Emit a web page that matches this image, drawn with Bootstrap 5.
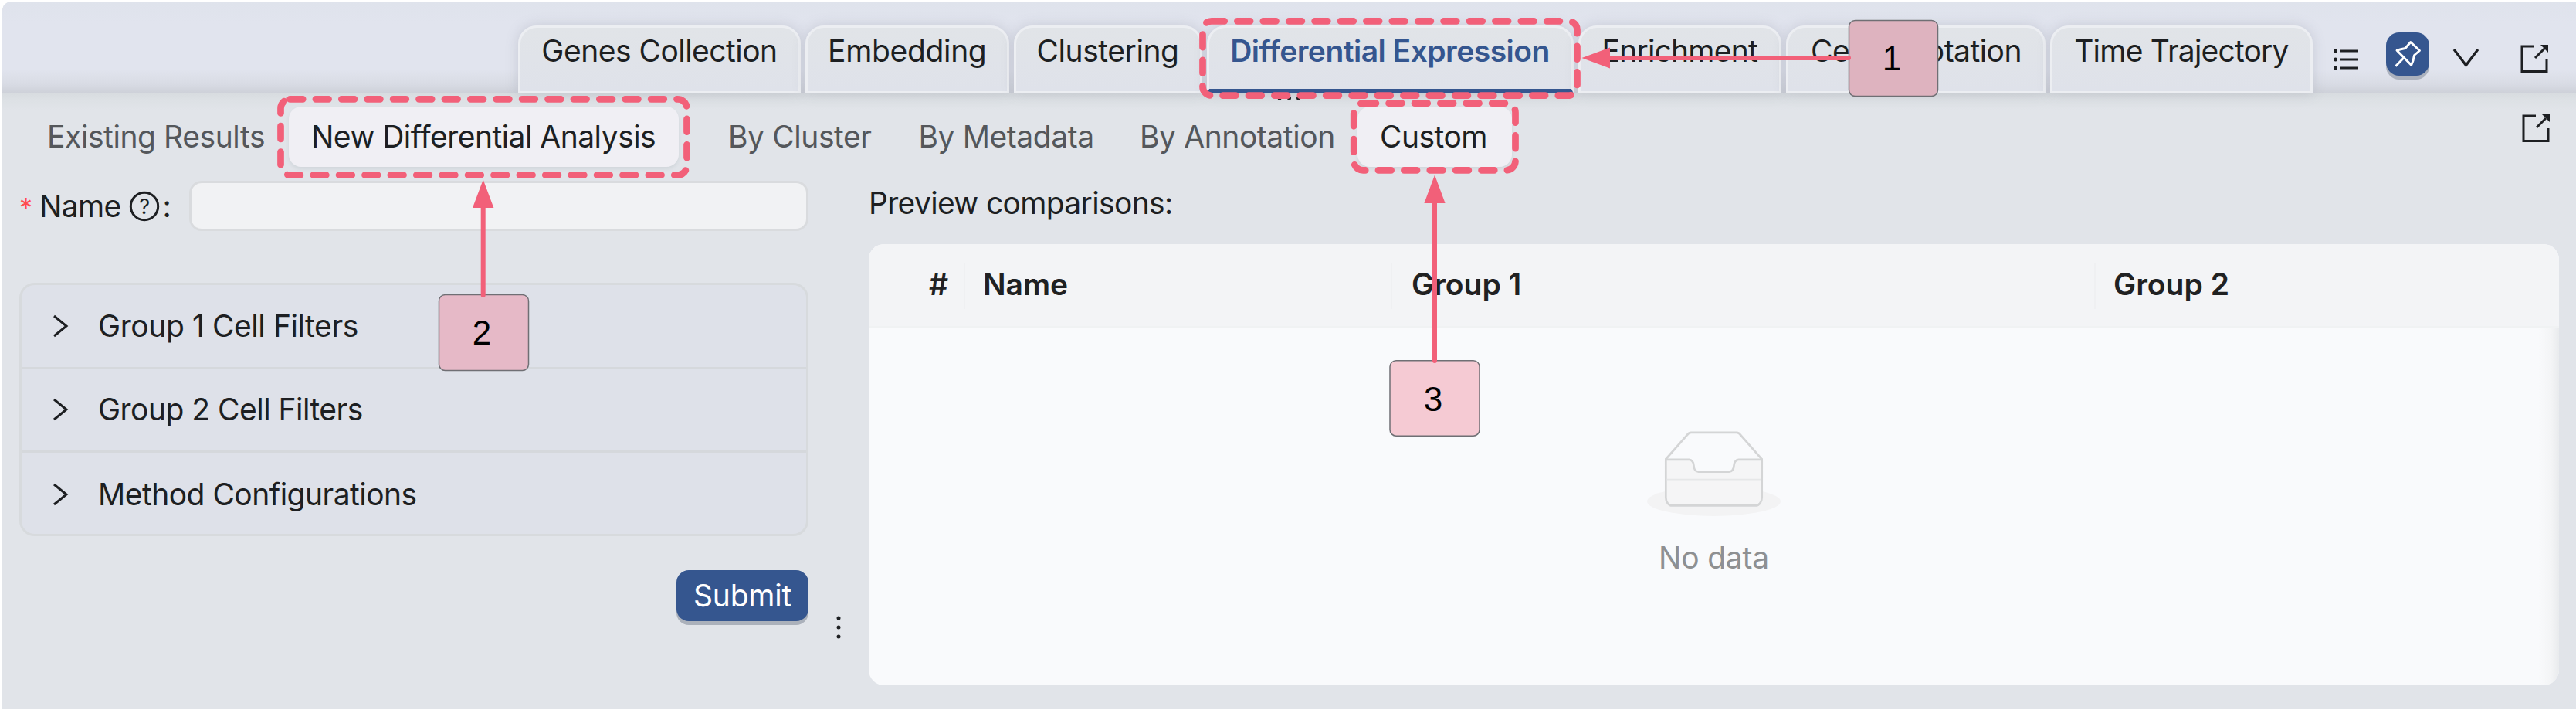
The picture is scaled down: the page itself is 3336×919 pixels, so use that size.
<!DOCTYPE html>
<html lang="en">
<head>
<meta charset="utf-8">
<meta name="viewport" content="width=device-width, initial-scale=1">
<title>Differential Expression</title>
<link href="https://cdn.jsdelivr.net/npm/bootstrap@5.3.0/dist/css/bootstrap.min.css" rel="stylesheet">
<style>
  :root { --ink:#1d1f22; --blue:#35568f; --pink:#f26079; --panel:#e1e4e9; }
  body { font-family:Inter,"Liberation Sans",sans-serif; font-size:39px; line-height:48px; letter-spacing:-.52px; color:var(--ink); background:#fff; }
  .app-shell { width:3336px; height:919px; padding:2px 0 1px 3px; }
  .app-panel { background:var(--panel); border-radius:12px 0 0 0; }
  .top-strip { height:119px; padding-left:668px; border-radius:12px 0 0 0;
    background:linear-gradient(#dfe3ec 0, #e1e4ee 30px, #e1e4ee 88px, #d9dce5 106px, #cdd0d8 119px); }
  .top-tabs { gap:6px; }
  .top-tabs .nav-link { height:88px; padding:6px 0 0 0; border:3px solid #eceef2; border-radius:24px 24px 0 0; color:var(--ink);
    background:linear-gradient(#e1e4e8, #dfe2ea); text-align:center; box-shadow:0 0 16px rgba(120,125,140,.25); }
  .top-tabs .nav-link.active { color:var(--blue); font-weight:600; border-bottom:6px solid var(--blue);
    background:linear-gradient(#e1e4e8, #dfe2ea); }
  .top-tabs .w-cell { padding:6px 28px 0 29px; }
  .w-genes{width:366px} .w-embed{width:263.5px} .w-clust{width:244px} .w-diff{width:475px} .w-enrich{width:263.5px} .w-cell{width:336px} .w-time{width:340px}
  .ls-8{letter-spacing:-.8px} .ls-6{letter-spacing:-.66px} .ls-4{letter-spacing:-.42px} .ls-3{letter-spacing:-.33px} .ls-2{letter-spacing:-.22px} .ls-0{letter-spacing:0}
  .tool-set { margin-left:25px; height:66px; margin-bottom:13px; }
  .pin-btn { width:56px; height:56px; border-radius:17px; background:var(--blue); box-shadow:0 5px 0 #abb1bd; }
  .sub-row { height:95px; padding:17px 32.5px 0 26px; background:linear-gradient(#d8dce0 0, #dde1e5 9px, var(--panel) 22px); }
  .sub-row .nav-link { height:78px; padding:15px 0 15px 32px; color:#54575b; border-radius:16px; white-space:nowrap; }
  .sub-row .nav-link.active { background:#f0eff4; color:var(--ink); padding-left:29px; box-shadow:0 3px 4px rgba(150,165,170,.2); }
  .s-exist{width:345px} .s-new{width:505px;margin-right:32px} .s-clus{width:246.5px} .s-meta{width:286.5px} .s-anno{width:314px} .s-cust{width:200px}
  .form-col { width:1022px; margin-left:22px; padding-top:18px; }
  .name-label { width:219.500px; }
  .req-star { color:#ff4d4f; width:26px; font-size:34px; line-height:40px; padding-top:5px; }
  .name-input { height:65px; border:3px solid #d9dbde; border-radius:16px; background:#f1f2f4; }
  .filters { margin-top:67px; border:3px solid #d7dadd; border-radius:20px; background:#dee1e9; overflow:hidden; height:328px; }
  .filters .list-group-item { height:108.500px; padding:0 0 0 40px; flex:none; background:transparent; color:var(--ink); border:0; border-bottom:3px solid #d5d8dc; }
  .filters .list-group-item:last-child { border-bottom:0; }
  .filters svg { margin-right:37px; }
  .submit-btn { width:171px; height:66px; margin-top:44px; padding:0; font-size:39px; line-height:66px; letter-spacing:-.22px; color:#fff; background:var(--blue); border:0; border-radius:16px; box-shadow:0 5px 0 #abb1bb; }
  .splitter { width:78px; padding-top:579px; }
  .preview-col { width:2189px; padding-top:23px; }
  .preview-card { margin-top:29px; height:571px; border-radius:20px; overflow:hidden; background:#f9fafc; position:relative; }
  .preview-card::after { content:""; position:absolute; top:108px; bottom:0; right:0; width:27px; background:linear-gradient(90deg, rgba(238,239,241,0), rgba(240,241,242,.6) 60%, #e9ebed); }
  .cmp-table { table-layout:fixed; --bs-table-bg:#f3f4f6; letter-spacing:0; color:#202122; }
  .cmp-table th { height:107px; padding:0 0 2px 23px; border-bottom:2px solid #f0f2f3; font-weight:600; vertical-align:middle; line-height:48px;
    background-image:linear-gradient(#eff0f2,#eff0f2); background-repeat:no-repeat; background-size:2px 60px; background-position:right 24px; }
  .cmp-table th:first-child { padding:0 22px 2px 0; text-align:right; }
  .cmp-table th:last-child { background-image:none; }
  .cmp-table th:nth-child(3) { padding-left:25px; }
  .c-num{width:125px} .c-name{width:553px} .c-g1{width:911px}
  .no-data { padding-top:133px; color:#8e9092; letter-spacing:-.22px; }
  .no-data div { margin-top:30px; }
  .callouts { position:absolute; left:0; top:0; pointer-events:none; }
  .step-no { font:44px "Liberation Sans",Arial,sans-serif; letter-spacing:0; }
</style>
</head>
<body>
<div class="app-shell position-relative overflow-hidden">
  <div class="app-panel h-100">
    <header class="top-strip d-flex align-items-end">
      <nav class="top-tabs nav flex-nowrap text-nowrap">
        <a class="nav-link w-genes">Genes Collection</a>
        <a class="nav-link w-embed ls-3">Embedding</a>
        <a class="nav-link w-clust ls-4">Clustering</a>
        <a class="nav-link w-diff active">Differential Expression</a>
        <a class="nav-link w-enrich ls-8">Enrichment</a>
        <a class="nav-link w-cell d-flex justify-content-between"><span>Ce</span><span>otation</span></a>
        <a class="nav-link w-time ls-8">Time Trajectory</a>
      </nav>
      <div class="tool-set d-flex align-items-center">
        <svg class="mt-1" width="36" height="36" viewBox="0 0 36 36" stroke="#1d1f22" stroke-width="2.8" fill="#1d1f22">
          <path d="M10 7h24M10 18h24M10 29h24"/><g stroke="none"><circle cx="4.5" cy="7" r="2.5"/><circle cx="4.5" cy="18" r="2.5"/><circle cx="4.5" cy="29" r="2.5"/></g>
        </svg>
        <span class="pin-btn d-block" style="margin:-10px 29px 0 34px">
          <svg class="d-block" width="56" height="56" viewBox="0 0 56 56" fill="none" stroke="#fff" stroke-width="2.9" stroke-linejoin="round">
            <path d="M31.8 12.5 43.5 23.5 36.5 29.5Q35.5 37 32.7 42.3L14 23.2Q19 21.5 25 20.5ZM22.8 33 12.4 43.7"/>
          </svg>
        </span>
        <svg width="36" height="36" viewBox="0 0 36 36" fill="none" stroke="#1d1f22" stroke-width="3.2"><path d="M3 7 18.5 27.500 34 7"/></svg>
        <svg style="margin-left:51px" width="40" height="40" viewBox="0 0 40 40" fill="none" stroke="#1d1f22" stroke-width="3">
          <path d="M20 5H4V37.500H36V21M21 20 33 8"/><path d="M28 3H38V13Z" fill="#1d1f22" stroke="none"/>
        </svg>
      </div>
    </header>

    <div class="sub-row d-flex align-items-start">
      <nav class="nav flex-nowrap">
        <a class="nav-link s-exist ls-4">Existing Results</a>
        <a class="nav-link s-new active">New Differential Analysis</a>
        <a class="nav-link s-clus ls-4">By Cluster</a>
        <a class="nav-link s-meta ls-4">By Metadata</a>
        <a class="nav-link s-anno ls-4">By Annotation</a>
        <a class="nav-link s-cust active">Custom</a>
      </nav>
      <svg class="ms-auto" style="margin-top:7px" width="40" height="40" viewBox="0 0 40 40" fill="none" stroke="#1d1f22" stroke-width="3">
        <path d="M20 5H4V37.500H36V21M21 20 33 8"/><path d="M28 3H38V13Z" fill="#1d1f22" stroke="none"/>
      </svg>
    </div>

    <main class="d-flex">
      <section class="form-col flex-shrink-0">
        <div class="d-flex align-items-center">
          <label class="name-label d-flex align-items-center flex-shrink-0">
            <span class="req-star">*</span><span class="ls-6">Name</span>
            <svg style="margin:0 4px 0 10px" width="40" height="40" viewBox="0 0 40 40"><circle cx="20" cy="20" r="17.700" fill="none" stroke="#1d1f22" stroke-width="3"/><text x="20" y="30" text-anchor="middle" font-size="27" fill="#1d1f22">?</text></svg><span>:</span>
          </label>
          <input class="name-input form-control shadow-none" type="text" aria-label="Name">
        </div>
        <div class="filters list-group">
          <a class="list-group-item d-flex align-items-center ls-4"><svg width="22" height="30" viewBox="0 0 22 30" fill="none" stroke="#1d1f22" stroke-width="3"><path d="M2 2 18 15 2 28"/></svg>Group 1 Cell Filters</a>
          <a class="list-group-item d-flex align-items-center"><svg width="22" height="30" viewBox="0 0 22 30" fill="none" stroke="#1d1f22" stroke-width="3"><path d="M2 2 18 15 2 28"/></svg>Group 2 Cell Filters</a>
          <a class="list-group-item d-flex align-items-center"><svg width="22" height="30" viewBox="0 0 22 30" fill="none" stroke="#1d1f22" stroke-width="3"><path d="M2 2 18 15 2 28"/></svg>Method Configurations</a>
        </div>
        <div class="d-flex justify-content-end"><button class="btn submit-btn" type="button">Submit</button></div>
      </section>

      <div class="splitter d-flex justify-content-center flex-shrink-0">
        <svg width="10" height="34" viewBox="0 0 10 34" fill="#1d1f22"><circle cx="5" cy="5" r="2.500"/><circle cx="5" cy="17" r="2.500"/><circle cx="5" cy="29" r="2.500"/></svg>
      </div>

      <section class="preview-col flex-shrink-0">
        <div class="ls-6">Preview comparisons:</div>
        <div class="preview-card">
          <table class="table cmp-table mb-0">
            <colgroup><col class="c-num"><col class="c-name"><col class="c-g1"><col></colgroup>
            <thead><tr><th>#</th><th>Name</th><th>Group 1</th><th>Group 2</th></tr></thead>
          </table>
          <div class="no-data text-center">
            <svg class="d-block mx-auto" width="173" height="111" viewBox="0 0 64 41">
              <g transform="translate(0 1)" fill="none" fill-rule="evenodd">
                <ellipse fill="#f3f3f4" cx="32" cy="33" rx="32" ry="7"/>
                <g fill-rule="nonzero" stroke="#d4d5d6">
                  <path d="M55 12.760L44.854 1.258C44.367.474 43.656 0 42.907 0H21.093c-.749 0-1.460.474-1.947 1.257L9 12.761V22h46v-9.240z"/>
                  <path d="M41.613 15.931c0-1.605.994-2.930 2.227-2.931H55v18.137C55 33.260 53.680 35 52.050 35h-40.100C10.320 35 9 33.259 9 31.137V13h11.160c1.233 0 2.227 1.323 2.227 2.928v.022c0 1.605 1.005 2.901 2.237 2.901h14.752c1.232 0 2.237-1.308 2.237-2.913v-.007z" fill="#f5f5f6"/>
                  <path d="M9.500 22.500h45" stroke="#e6e7e8" stroke-width=".7"/>
                </g>
              </g>
            </svg>
            <div>No data</div>
          </div>
        </div>
      </section>
    </main>
  </div>

  <!-- tutorial callouts laid over the interface -->
  <svg class="callouts" width="3336" height="919" viewBox="0 0 3336 919">
    <g fill="#1d1f22"><circle cx="1657" cy="127" r="2.500"/><circle cx="1669.500" cy="127" r="2.500"/><circle cx="1681.500" cy="127" r="2.500"/></g>
    <g fill="none" stroke="#f26079" stroke-width="8.700" stroke-linecap="round" stroke-dasharray="16.700 16.700">
      <rect x="1557.500" y="27.300" width="485" height="96.400" rx="11.500"/>
      <rect x="363.500" y="128.300" width="526" height="98.200" rx="12"/>
      <rect x="1753.200" y="133.700" width="209.300" height="86.600" rx="12"/>
    </g>
    <g stroke="#6f6f74" stroke-width="1.500">
      <rect x="2394.500" y="26.500" width="115" height="98" rx="8" fill="#deb3bf"/>
      <rect x="568.500" y="381.500" width="116" height="98" rx="8" fill="#e6b9c7"/>
      <rect x="1800" y="466.700" width="116" height="97.500" rx="8" fill="#f5cad3"/>
    </g>
    <g stroke="#f26079" stroke-width="6" stroke-linecap="round">
      <path d="M2080 75H2394M625.700 265V382M1858 258V467"/>
    </g>
    <g fill="#f26079"><path d="M2048.500 75 2085 61.500V88.500ZM625.700 232.500 612 269H639.400ZM1858 226.500 1844.400 263H1871.600Z"/></g>
    <g class="step-no" fill="#000" text-anchor="middle">
      <text x="2450" y="90.500">1</text><text x="624" y="446.300">2</text><text x="1856" y="532">3</text>
    </g>
  </svg>
</div>
<script src="https://cdn.jsdelivr.net/npm/bootstrap@5.3.0/dist/js/bootstrap.bundle.min.js"></script>
</body>
</html>
